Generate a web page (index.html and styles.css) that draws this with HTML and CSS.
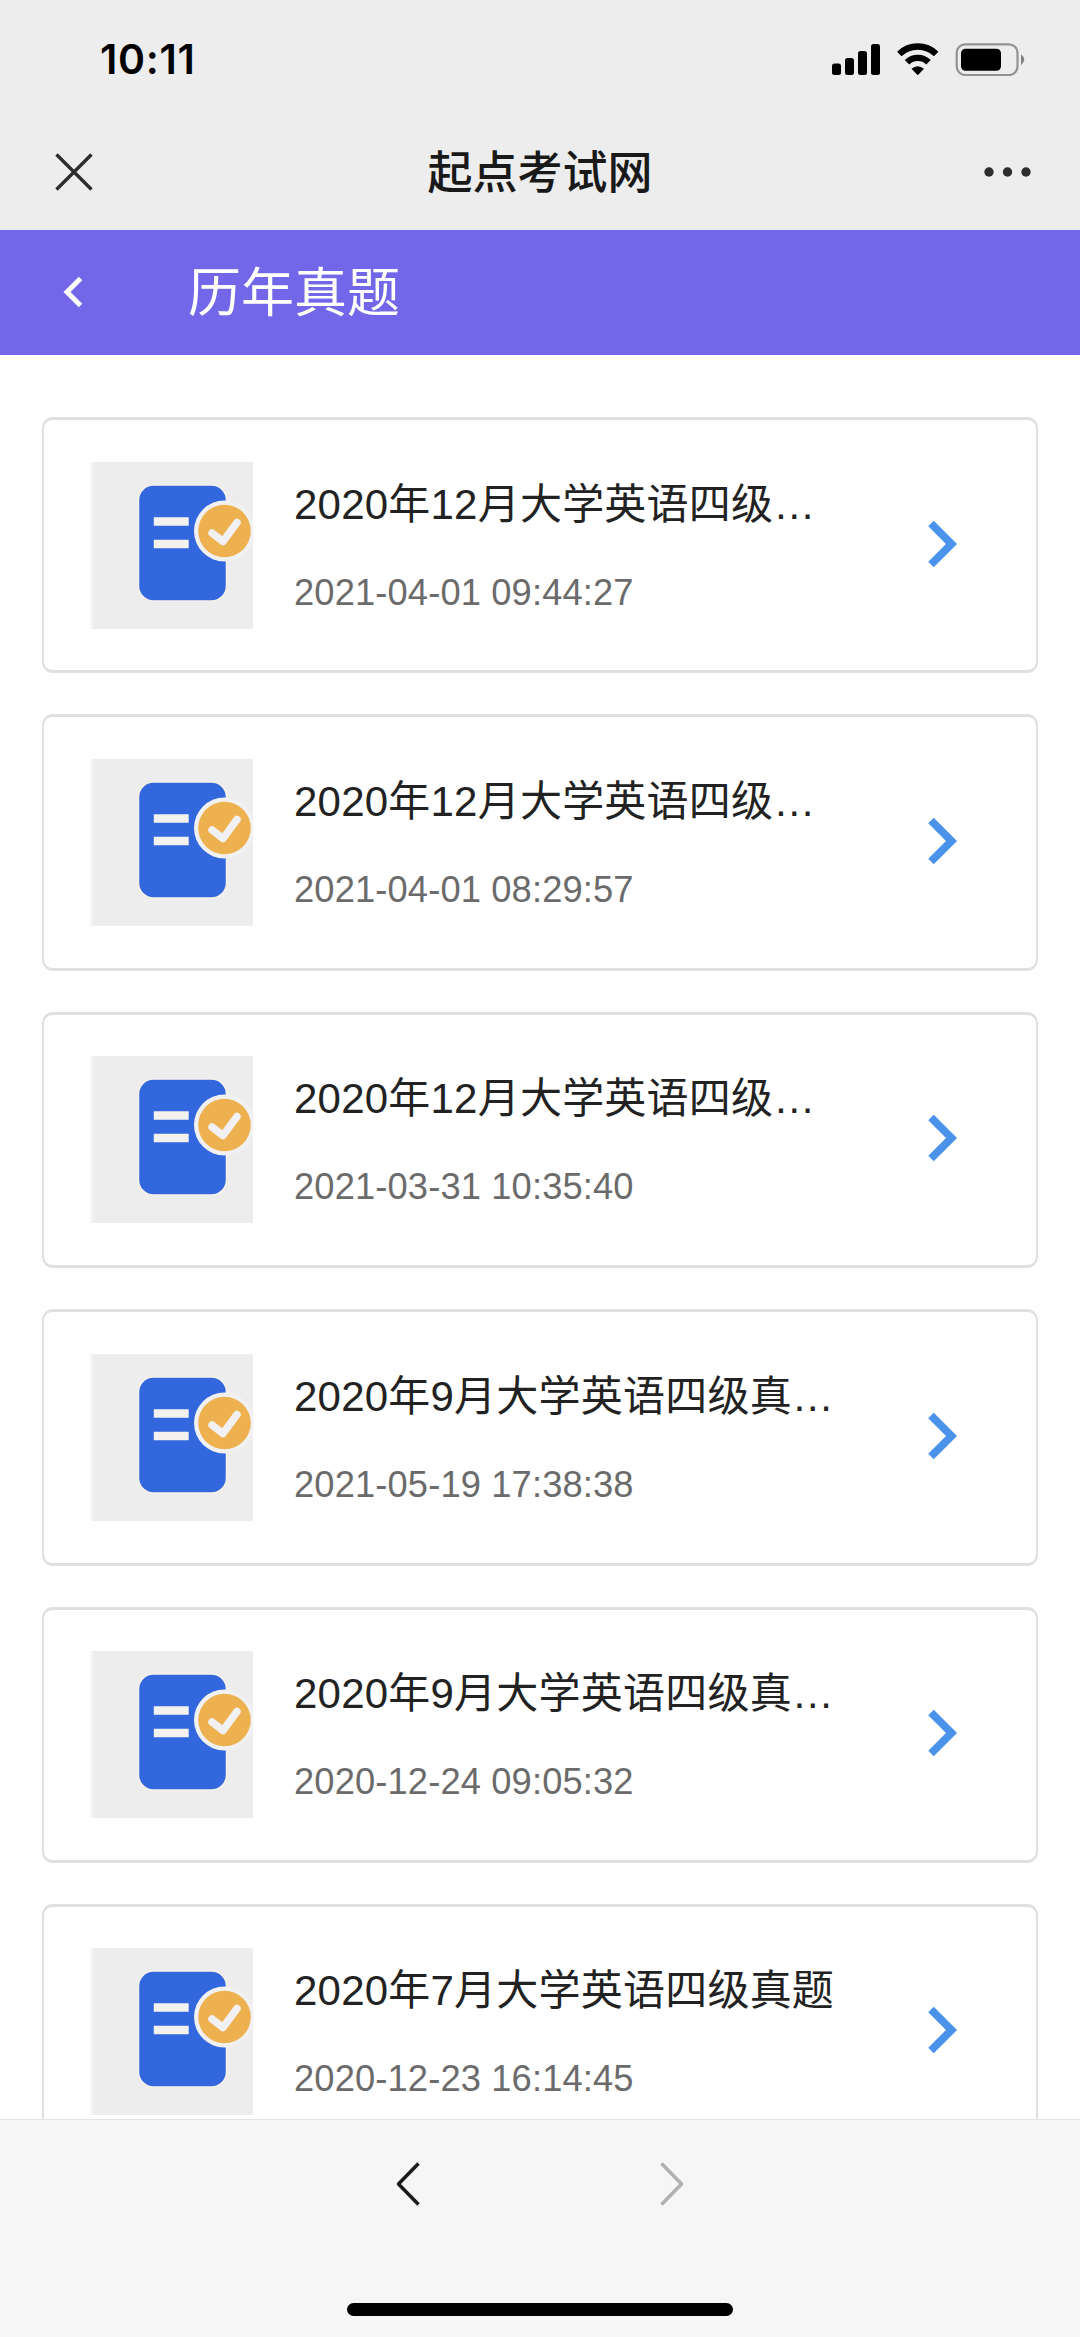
FILE: index.html
```html
<!DOCTYPE html>
<html lang="zh-CN">
<head>
<meta charset="utf-8">
<title>历年真题</title>
<link rel="stylesheet" href="styles.css">
</head>
<body>
<svg class="defs" aria-hidden="true">
  <defs>
    <linearGradient id="thumb-edge" x1="0" x2="1" y1="0" y2="0">
      <stop offset="0" stop-color="#ededed" stop-opacity="0"/>
      <stop offset="1" stop-color="#ededed"/>
    </linearGradient>
  </defs>
  <symbol id="paper" viewBox="0 0 164 167">
    <rect x="0" width="5" height="167" fill="url(#thumb-edge)"/>
    <rect x="5" width="159" height="167" fill="#ededed"/>
    <rect x="49.500" y="23" width="88" height="116" rx="15" fill="#3267de" stroke="#f6f2ea" stroke-width="1.500"/>
    <path d="M69 59.500H95.500M69 82H95.500" stroke="#f4f2ef" stroke-width="8.400" stroke-linecap="square" fill="none"/>
    <circle cx="135.500" cy="69" r="30.500" fill="#f1f1f1"/>
    <circle cx="135.500" cy="69" r="26.300" fill="#eeb150"/>
    <path d="M123 71L134 79.500L148 60.500" fill="none" stroke="#f1f1f3" stroke-width="7.500" stroke-linecap="round" stroke-linejoin="round"/>
  </symbol>
  <symbol id="arrow" viewBox="0 0 30 48">
    <path d="M3 3.500L23.500 24L3 44.500" fill="none" stroke="#4a92ea" stroke-width="7.800"/>
  </symbol>
</svg>

<div class="screen">
  <div class="status">
    <span class="clock">10:11</span>
    <svg class="indicators" viewBox="0 0 194 34" width="194" height="34">
      <rect x="0" y="21.500" width="9" height="11.500" rx="2.500"/>
      <rect x="13" y="16" width="9" height="17" rx="2.500"/>
      <rect x="26" y="9" width="9" height="24" rx="2.500"/>
      <rect x="39" y="2" width="9" height="31" rx="2.500"/>
      <path d="M67.300 12A26.500 26.500 0 0 1 104.200 12M75 20.200A15.500 15.500 0 0 1 96.500 20.200" fill="none" stroke="#000" stroke-width="6.400"/>
      <path d="M79.500 26.800Q85.750 21.500 92 26.800L85.750 33.200Z"/>
      <rect x="124.700" y="2.300" width="60.800" height="30.700" rx="8.500" fill="none" stroke="#929292" stroke-width="2.200"/>
      <rect x="129" y="6.800" width="40" height="22" rx="4.500"/>
      <path d="M189 12.200Q195.500 17.500 189 23.200Z" fill="#808080"/>
    </svg>
  </div>

  <div class="topbar">
    <svg class="close" viewBox="0 0 38 38" width="38" height="38"><path d="M1.500 1.500L36.500 36.500M36.500 1.500L1.500 36.500" stroke="#2d2d2d" stroke-width="3.400"/></svg>
    <h1 class="site">起点考试网</h1>
    <svg class="more" viewBox="0 0 48 10" width="48" height="10" fill="#2d2d2d"><circle cx="5" cy="5" r="4.700"/><circle cx="23.500" cy="5" r="4.700"/><circle cx="42" cy="5" r="4.700"/></svg>
  </div>

  <header class="header">
    <svg class="back" viewBox="0 0 20 32" width="20" height="32"><path d="M17.500 2.500L4 16L17.500 29.500" fill="none" stroke="#fff" stroke-width="5"/></svg>
    <h2 class="heading">历年真题</h2>
  </header>

  <main class="list">
    <article class="card">
      <svg class="thumb"><use href="#paper"/></svg>
      <div class="info"><p class="title">2020年12月大学英语四级…</p><time class="date">2021-04-01 09:44:27</time></div>
      <svg class="go"><use href="#arrow"/></svg>
    </article>
    <article class="card">
      <svg class="thumb"><use href="#paper"/></svg>
      <div class="info"><p class="title">2020年12月大学英语四级…</p><time class="date">2021-04-01 08:29:57</time></div>
      <svg class="go"><use href="#arrow"/></svg>
    </article>
    <article class="card">
      <svg class="thumb"><use href="#paper"/></svg>
      <div class="info"><p class="title">2020年12月大学英语四级…</p><time class="date">2021-03-31 10:35:40</time></div>
      <svg class="go"><use href="#arrow"/></svg>
    </article>
    <article class="card">
      <svg class="thumb"><use href="#paper"/></svg>
      <div class="info"><p class="title">2020年9月大学英语四级真…</p><time class="date">2021-05-19 17:38:38</time></div>
      <svg class="go"><use href="#arrow"/></svg>
    </article>
    <article class="card">
      <svg class="thumb"><use href="#paper"/></svg>
      <div class="info"><p class="title">2020年9月大学英语四级真…</p><time class="date">2020-12-24 09:05:32</time></div>
      <svg class="go"><use href="#arrow"/></svg>
    </article>
    <article class="card">
      <svg class="thumb"><use href="#paper"/></svg>
      <div class="info"><p class="title">2020年7月大学英语四级真题</p><time class="date">2020-12-23 16:14:45</time></div>
      <svg class="go"><use href="#arrow"/></svg>
    </article>
  </main>

  <footer class="toolbar">
    <nav class="nav">
      <svg viewBox="0 0 25 44" width="25" height="44"><path d="M22.500 1.500L2.500 22L22.500 42.500" fill="none" stroke="#1a1a1a" stroke-width="3.500" stroke-linejoin="round"/></svg>
      <svg viewBox="0 0 25 44" width="25" height="44"><path d="M2.500 1.500L22.500 22L2.500 42.500" fill="none" stroke="#b0b0b0" stroke-width="3.500" stroke-linejoin="round"/></svg>
    </nav>
    <div class="home"></div>
  </footer>
</div>
</body>
</html>
```
FILE: styles.css
```css
* {
  box-sizing: border-box;
}

body {
  margin: 0;
  background: #fff;
  font-family: "Liberation Sans", "Noto Sans CJK SC", sans-serif;
}

h1, h2, p {
  margin: 0;
  font-weight: 400;
}

svg {
  display: block;
  flex: none;
}

.defs {
  position: absolute;
  width: 0;
  height: 0;
}

.screen {
  display: flex;
  flex-direction: column;
  width: 1080px;
  height: 2337px;
  overflow: hidden;
}

.status {
  flex: none;
  display: flex;
  justify-content: space-between;
  align-items: center;
  height: 117px;
  padding: 0 54px 0 100px;
  background: #ededed;
}

.clock {
  padding-top: 2px;
  font: 600 41px/1 Inter, sans-serif;
  letter-spacing: 0.700px;
}

.topbar {
  flex: none;
  display: grid;
  grid-template-columns: 1fr auto 1fr;
  align-items: center;
  height: 112.500px;
  padding: 0 48px 2px 55px;
  background: #ededed;
}

.site {
  padding: 0 7px 5px 0;
  font: 500 45px/60px "Noto Sans CJK SC", sans-serif;
  color: #191919;
}

.more {
  justify-self: end;
}

.header {
  flex: none;
  display: flex;
  align-items: center;
  gap: 105px;
  height: 125px;
  padding-left: 63px;
  background: #7167e8;
  color: #fff;
}

.heading {
  padding-bottom: 6px;
  font: 400 53px/70px "Noto Sans CJK SC", sans-serif;
}

.list {
  flex: 1;
  min-height: 0;
  overflow: hidden;
  padding: 62.500px 42px 0;
}

.card {
  display: flex;
  align-items: flex-start;
  height: 256.400px;
  margin-bottom: 41px;
  padding: 41.500px 78px 0 45px;
  border: solid #e0e0e0;
  border-width: 3px 2px;
  border-radius: 11px;
}

.thumb {
  width: 164px;
  height: 167px;
}

.info {
  flex: 1;
  padding: 13px 0 0 41px;
  white-space: nowrap;
}

.title {
  font-size: 42px;
  line-height: 60px;
  letter-spacing: 0.220px;
  color: #222;
}

.date {
  display: block;
  margin-top: 37px;
  font-size: 36.300px;
  line-height: 42px;
  letter-spacing: 0.140px;
  color: #6b6b6b;
}

.go {
  width: 30px;
  height: 48px;
  margin-top: 58px;
}

.toolbar {
  flex: none;
  display: flex;
  flex-direction: column;
  justify-content: space-between;
  align-items: center;
  height: 218px;
  padding: 42px 0 21px;
  border-top: 1px solid #e4e4e4;
  background: #f6f6f6;
}

.nav {
  display: flex;
  gap: 238px;
}

.home {
  width: 386px;
  height: 13px;
  border-radius: 7px;
  background: #000;
}
```
